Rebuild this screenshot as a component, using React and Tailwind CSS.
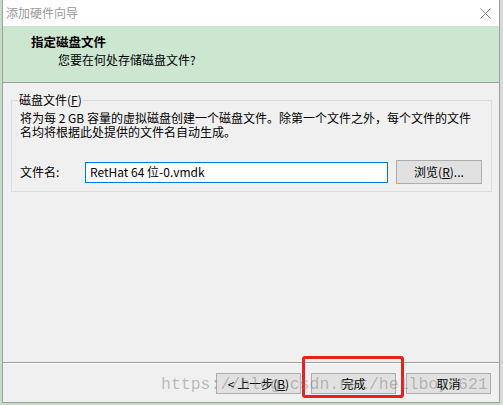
import React from "react";

const ui = "font-['Noto_Sans_CJK_SC','Noto_Sans',sans-serif]";

function WinButton({ children, className = "" }) {
  return (
    <button
      className={`h-[21px] w-[85px] border border-[#adadad] bg-[#e1e1e1] text-[12px] leading-none text-black ${className}`}
    >
      {children}
    </button>
  );
}

export default function App() {
  return (
    <div className={`flex h-[405px] w-[503px] overflow-hidden bg-[#c2dfc6] ${ui}`}>
      <div className="relative ml-[2px] flex h-[403px] w-[498px] flex-col border-x border-b border-[#a0a0a0] bg-[#f0f0f0]">
        {/* title bar */}
        <div className="flex h-[26px] items-center justify-between bg-white pl-[3px] pr-[8px]">
          <span className="text-[12px] text-[#9a9a9a]">添加硬件向导</span>
          <svg width="11" height="11" viewBox="0 0 11 11">
            <path d="M0.5 0.5 L10.5 10.5 M10.5 0.5 L0.5 10.5" stroke="#8a8a8a" strokeWidth="1" />
          </svg>
        </div>

        {/* header */}
        <div className="h-[57px] border-b border-[#a0a0a0] bg-[#cce6d0] pl-[28px] pt-[7px]">
          <p className="text-[12.5px] font-bold leading-[18px] text-black">指定磁盘文件</p>
          <p className="pl-[27px] text-[12px] leading-[18px] text-black">您要在何处存储磁盘文件?</p>
        </div>

        {/* body */}
        <div className="flex flex-1 flex-col">
          <fieldset className="ml-[8px] mr-[7px] mt-[9px] border border-[#dcdcdc] px-[8px] pb-[7px]">
            <legend className="ml-[-2px] px-[1px] text-[12px] leading-[16px] text-black">
              磁盘文件(<span className="underline">F</span>)
            </legend>
            <p className="mt-[3px] text-[12px] leading-[14px] text-black">
              将为每 2 GB 容量的虚拟磁盘创建一个磁盘文件。除第一个文件之外，每个文件的文件
              <br />
              名均将根据此处提供的文件名自动生成。
            </p>
            <div className="mt-[21px] flex h-[24px] items-center">
              <span className="w-[65px] text-[12px] text-black">文件名:</span>
              <div className="flex h-[21px] w-[303px] items-center border border-[#0078d7] bg-white pl-[4px] text-[12px] text-black">
                RetHat 64 位-0.vmdk
              </div>
              <button className="ml-[8px] h-[24px] w-[86px] border border-[#adadad] bg-[#e1e1e1] text-[12px] text-black">
                浏览(<span className="underline">R</span>)...
              </button>
            </div>
          </fieldset>
          <div className="flex-1" />
        </div>

        {/* footer */}
        <div className="border-t border-[#a0a0a0]">
          <div className="h-px bg-white" />
          <div className="flex h-[38px] items-center justify-end gap-[10px] pr-[8px] pt-[1px]">
            <WinButton>
              &lt; 上一步(<span className="underline">B</span>)
            </WinButton>
            <WinButton>完成</WinButton>
            <WinButton>取消</WinButton>
          </div>
        </div>

        {/* annotation */}
        <div className="pointer-events-none absolute left-[299px] top-[356px] h-[42px] w-[102px] rounded-[3px] border-[3px] border-[#e8211b]" />

        {/* watermark */}
        <div className="pointer-events-none absolute left-[158px] top-[375px] whitespace-nowrap font-['Liberation_Mono',monospace] text-[16.5px] leading-[20px] text-[rgba(120,120,120,0.45)]">
          https://blog.csdn.net/hellboy0621
        </div>
      </div>
      <div className="h-full flex-1 bg-[#d8d8d8]" />
    </div>
  );
}
